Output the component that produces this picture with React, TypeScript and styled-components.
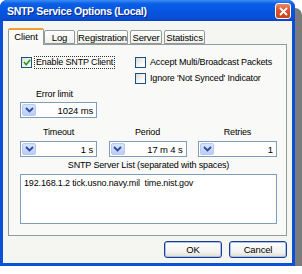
import React from "react";
import styled, { createGlobalStyle } from "styled-components";

const Global = createGlobalStyle`
  html, body { margin: 0; padding: 0; background: #ffffff; }
  body { font-family: "Liberation Sans", Arial, sans-serif; font-size: 9px; letter-spacing: -0.15px; color: #000; }
  * { box-sizing: border-box; }
`;

const Frame = styled.div`
  width: 295px;
  height: 266px;
  box-shadow: 7px 8px 0 #7b7b7b;
  border-radius: 7px 7px 0 0;
  background: #0a50d8;
  display: flex;
  flex-direction: column;
  padding: 0 3px 3px 3px;
`;

const TitleBar = styled.div`
  height: 21px;
  margin: 0 -3px;
  padding: 0 4px 0 7px;
  border-radius: 7px 7px 0 0;
  background: linear-gradient(180deg, #3d8cf5 0%, #0b5fe6 18%, #0554e0 55%, #0a4fd6 85%, #0744c4 100%);
  display: flex;
  align-items: center;
  justify-content: space-between;
`;

const Title = styled.span`
  color: #fff;
  font-family: "Liberation Sans", Arial, sans-serif;
  font-weight: bold;
  font-size: 10.5px;
  letter-spacing: -0.3px;
  text-shadow: 1px 1px 0 #0a2a8a;
`;

const CloseBtn = styled.div`
  width: 16px;
  height: 16px;
  margin-top: 1px;
  border: 1px solid #fff;
  border-radius: 3px;
  background: linear-gradient(180deg, #e88a6a 0%, #d8552e 45%, #c8421c 100%);
  display: flex;
  align-items: center;
  justify-content: center;
`;

const Body = styled.div`
  flex: 1;
  background: #f5f5f1;
  display: flex;
  flex-direction: column;
  padding: 7px 5px 0 5px;
`;

const TabStrip = styled.div`
  display: flex;
  align-items: flex-end;
  height: 16px;
`;

const Tab = styled.div<{ $active?: boolean; $w: number }>`
  width: ${(p) => p.$w}px;
  height: ${(p) => (p.$active ? 17 : 14)}px;
  margin-right: ${(p) => (p.$active ? 0 : 2)}px;
  margin-bottom: ${(p) => (p.$active ? -1 : 0)}px;
  position: relative;
  z-index: ${(p) => (p.$active ? 2 : 0)};
  border: 1px solid #919b9c;
  border-bottom: ${(p) => (p.$active ? "none" : "1px solid #919b9c")};
  border-top: ${(p) => (p.$active ? "2px solid #f0a030" : "1px solid #919b9c")};
  border-radius: 2px 2px 0 0;
  background: ${(p) => (p.$active ? "#fafaf8" : "linear-gradient(180deg, #ffffff 0%, #f0f0ea 100%)")};
  display: flex;
  align-items: center;
  justify-content: center;
  font-size: 9.5px;
  padding-bottom: ${(p) => (p.$active ? 2 : 0)}px;
`;

const Panel = styled.div`
  height: 192px;
  width: 279px;
  border: 1px solid #919b9c;
  background: #f9f9f7;
  padding: 11px 9px 0 11px;
  display: flex;
  flex-direction: column;
`;

const CheckGrid = styled.div`
  display: grid;
  grid-template-columns: 114px 1fr;
  row-gap: 4px;
  margin-left: 1px;
`;

const CheckRow = styled.label`
  display: flex;
  align-items: center;
  gap: 3px;
  height: 12px;
  white-space: nowrap;
`;

const Box = styled.span`
  width: 11px;
  height: 11px;
  border: 1px solid #1c5180;
  background: linear-gradient(135deg, #dcdcd6 0%, #f6f6f4 60%, #ffffff 100%);
  display: flex;
  align-items: center;
  justify-content: center;
  flex: none;
`;

const Focus = styled.span<{ $focus?: boolean }>`
  padding: 0 1px;
  outline: ${(p) => (p.$focus ? "1px dotted #333" : "none")};
  line-height: 11px;
`;

const FieldLabel = styled.div<{ $center?: boolean }>`
  height: 11px;
  line-height: 11px;
  text-align: ${(p) => (p.$center ? "center" : "left")};
  padding-left: ${(p) => (p.$center ? 0 : 16)}px;
`;

const Spin = styled.div`
  width: 100%;
  height: 16px;
  border: 1px solid #7f9db9;
  background: #fff;
  display: flex;
  align-items: center;
  padding: 1px;
`;

const SpinBtn = styled.span`
  width: 14px;
  height: 12px;
  border-radius: 2px;
  background: linear-gradient(180deg, #d8e4fb 0%, #bccdf5 100%);
  border: 1px solid #b8c8ee;
  display: flex;
  align-items: center;
  justify-content: center;
  flex: none;
`;

const SpinValue = styled.span`
  flex: 1;
  text-align: right;
  padding-right: 2px;
  font-size: 9.5px;
`;

const SpinCol = styled.div<{ $w: number; $gap: number }>`
  width: ${(p) => p.$w}px;
  display: flex;
  flex-direction: column;
  gap: ${(p) => p.$gap}px;
`;

const ErrorBlock = styled.div`
  margin-top: 5px;
`;

const SpinRow = styled.div`
  display: flex;
  justify-content: space-between;
  width: 257px;
  margin-top: 9px;
`;

const ListLabel = styled(FieldLabel)`
  width: 257px;
  margin-top: 3px;
`;

const TextArea = styled.div`
  width: 257px;
  height: 50px;
  border: 1px solid #7f9db9;
  background: #fff;
  padding: 3px 3px;
  margin-top: 3px;
  white-space: pre;
  line-height: 11px;
`;

const Buttons = styled.div`
  display: flex;
  justify-content: flex-end;
  gap: 7px;
  margin-top: 5px;
  width: 279px;
`;

const Button = styled.div`
  width: 58px;
  height: 17px;
  border: 1px solid #1a3d8c;
  border-radius: 3px;
  background: linear-gradient(180deg, #ffffff 0%, #f2f2ee 70%, #dcdcd4 100%);
  box-shadow: inset 0 0 0 1px #a8c0f0;
  display: flex;
  align-items: center;
  justify-content: center;
  font-size: 9.5px;
`;

const Chevron = () => (
  <svg width="9" height="6" viewBox="0 0 9 6">
    <path d="M1 1 L4.5 4.5 L8 1" stroke="#2a4c9a" strokeWidth="1.8" fill="none" />
  </svg>
);

const Check = () => (
  <svg width="8" height="7" viewBox="0 0 9 8">
    <path d="M1 3.5 L3.5 6.5 L8 1" stroke="#21a121" strokeWidth="1.9" fill="none" />
  </svg>
);

const Spinner = ({ value }: { value: string }) => (
  <Spin>
    <SpinBtn>
      <Chevron />
    </SpinBtn>
    <SpinValue>{value}</SpinValue>
  </Spin>
);

export default function App() {
  return (
    <>
      <Global />
      <Frame>
        <TitleBar>
          <Title>SNTP Service Options (Local)</Title>
          <CloseBtn>
            <svg width="9" height="9" viewBox="0 0 9 9">
              <path d="M1 1 L8 8 M8 1 L1 8" stroke="#fff" strokeWidth="1.8" />
            </svg>
          </CloseBtn>
        </TitleBar>
        <Body>
          <TabStrip>
            <Tab $active $w={36}>Client</Tab>
            <Tab $w={31}>Log</Tab>
            <Tab $w={51}>Registration</Tab>
            <Tab $w={32}>Server</Tab>
            <Tab $w={41}>Statistics</Tab>
          </TabStrip>
          <Panel>
            <CheckGrid>
              <CheckRow>
                <Box><Check /></Box>
                <Focus $focus>Enable SNTP Client</Focus>
              </CheckRow>
              <CheckRow>
                <Box />
                <Focus>Accept Multi/Broadcast Packets</Focus>
              </CheckRow>
              <span />
              <CheckRow>
                <Box />
                <Focus>Ignore 'Not Synced' Indicator</Focus>
              </CheckRow>
            </CheckGrid>
            <ErrorBlock>
              <SpinCol $w={77} $gap={2}>
                <FieldLabel>Error limit</FieldLabel>
                <Spinner value="1024 ms" />
              </SpinCol>
            </ErrorBlock>
            <SpinRow>
              <SpinCol $w={77} $gap={3}>
                <FieldLabel $center>Timeout</FieldLabel>
                <Spinner value="1 s" />
              </SpinCol>
              <SpinCol $w={78} $gap={3}>
                <FieldLabel $center>Period</FieldLabel>
                <Spinner value="17 m 4 s" />
              </SpinCol>
              <SpinCol $w={79} $gap={3}>
                <FieldLabel $center>Retries</FieldLabel>
                <Spinner value="1" />
              </SpinCol>
            </SpinRow>
            <ListLabel $center>SNTP Server List (separated with spaces)</ListLabel>
            <TextArea>{"192.168.1.2 tick.usno.navy.mil  time.nist.gov"}</TextArea>
          </Panel>
          <Buttons>
            <Button>OK</Button>
            <Button>Cancel</Button>
          </Buttons>
        </Body>
      </Frame>
    </>
  );
}
